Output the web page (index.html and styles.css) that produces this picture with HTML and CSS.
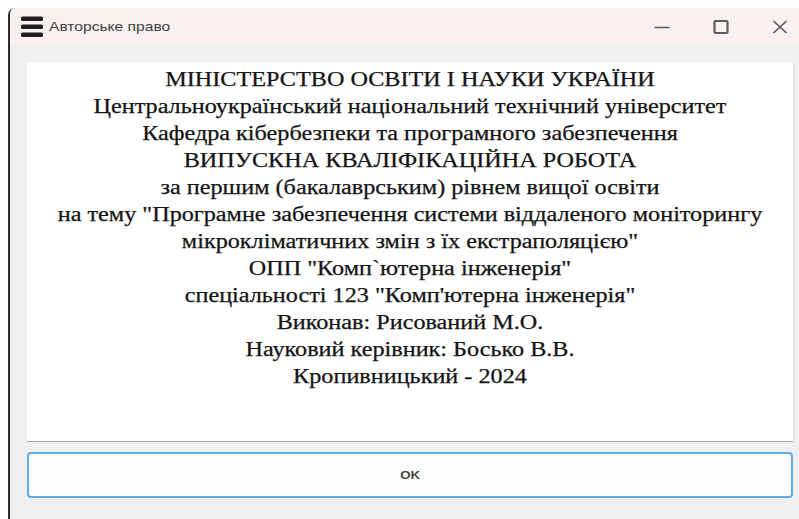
FILE: index.html
```html
<!DOCTYPE html>
<html lang="uk">
<head>
<meta charset="utf-8">
<title>Авторське право</title>
<link rel="stylesheet" href="styles.css">
</head>
<body>
<div class="window">
  <div class="titlebar">
    <svg class="app-icon" width="22" height="22" viewBox="0 0 22 22">
      <rect x="0" y="0.5" width="22" height="4.5" rx="1.5" fill="#1e1e1e"/>
      <rect x="0" y="8.5" width="22" height="4.5" rx="1.5" fill="#1e1e1e"/>
      <rect x="0" y="16.5" width="22" height="4.5" rx="1.5" fill="#1e1e1e"/>
    </svg>
    <span class="title">Авторське право</span>
    <div class="controls">
      <span class="ctl">
        <svg width="16" height="16" viewBox="0 0 16 16"><path d="M0.5 8.5h15" stroke="#5c5c5c" stroke-width="1.6"/></svg>
      </span>
      <span class="ctl">
        <svg width="16" height="16" viewBox="0 0 16 16"><rect x="1.5" y="2" width="13" height="12" rx="1" fill="none" stroke="#5c5c5c" stroke-width="2.2"/></svg>
      </span>
      <span class="ctl">
        <svg width="16" height="16" viewBox="0 0 16 16"><path d="M1.5 2l13 12M14.5 2l-13 12" stroke="#5c5c5c" stroke-width="1.7"/></svg>
      </span>
    </div>
  </div>
  <div class="content">
    <div class="panel">
      <div class="text-block">
        <p class="line">МІНІСТЕРСТВО ОСВІТИ І НАУКИ УКРАЇНИ</p>
        <p class="line">Центральноукраїнський національний технічний університет</p>
        <p class="line">Кафедра кібербезпеки та програмного забезпечення</p>
        <p class="line">ВИПУСКНА КВАЛІФІКАЦІЙНА РОБОТА</p>
        <p class="line">за першим (бакалаврським) рівнем вищої освіти</p>
        <p class="line">на тему "Програмне забезпечення системи віддаленого моніторингу</p>
        <p class="line">мікрокліматичних змін з їх екстраполяцією"</p>
        <p class="line">ОПП "Комп`ютерна інженерія"</p>
        <p class="line">спеціальності 123 "Комп'ютерна інженерія"</p>
        <p class="line">Виконав: Рисований М.О.</p>
        <p class="line">Науковий керівник: Босько В.В.</p>
        <p class="line">Кропивницький - 2024</p>
      </div>
    </div>
    <button class="ok" type="button"><span class="ok-label">OK</span></button>
  </div>
</div>
</body>
</html>
```
FILE: styles.css
```css
html, body {
  margin: 0;
  padding: 0;
  background: #ffffff;
}

body {
  width: 799px;
  height: 519px;
  overflow: hidden;
}

/* the window runs a little past the right edge of the viewport */
.window {
  margin: 8px 0 0 8px;
  width: 799px;
  height: 511px;
  border-left: 2px solid #2b2b2b;
  border-top-left-radius: 7px;
  background: #f0f0f0;
  display: flex;
  flex-direction: column;
  overflow: hidden;
}

.titlebar {
  height: 37px;
  flex: none;
  background: #f8f1ef;
  display: flex;
  align-items: center;
  padding-left: 11px;
}

.app-icon {
  flex: none;
}

.title {
  margin-left: 6px;
  font-family: "Liberation Sans", Arial, sans-serif;
  font-size: 13px;
  color: #404040;
  display: inline-block;
  transform: scaleX(1.2);
  transform-origin: left center;
}

.controls {
  margin-left: auto;
  display: flex;
  height: 100%;
}

.ctl {
  width: 59px;
  display: flex;
  align-items: center;
  justify-content: center;
}

.controls .ctl:first-child {
  padding-top: 1px;
}

.content {
  flex: 1;
  display: flex;
  flex-direction: column;
  padding: 17px 16px 0 17px;
}

.panel {
  height: 375px;
  padding-top: 4px;
  background: #ffffff;
  border-bottom: 1px solid #a8a8a8;
  box-shadow: 1px 0 2px rgba(0, 0, 0, 0.07);
}

/* the dialog text is drawn wide, like the rest of the window */
.text-block {
  transform: scaleX(1.21);
  text-align: center;
  font-family: "Liberation Serif", "Times New Roman", serif;
  font-size: 20px;
  line-height: 27px;
  color: #141414;
  -webkit-text-stroke: 0.25px #141414;
}

.line {
  margin: 0;
  white-space: nowrap;
}

.ok {
  margin-top: 10px;
  height: 46px;
  border: 2px solid #62aaea;
  border-radius: 4px;
  background: #fbfbfb;
  font-family: "Liberation Sans", Arial, sans-serif;
  font-size: 11px;
  font-weight: bold;
  color: #444444;
  padding: 0;
}

.ok-label {
  display: inline-block;
  transform: scaleX(1.2);
}
```
